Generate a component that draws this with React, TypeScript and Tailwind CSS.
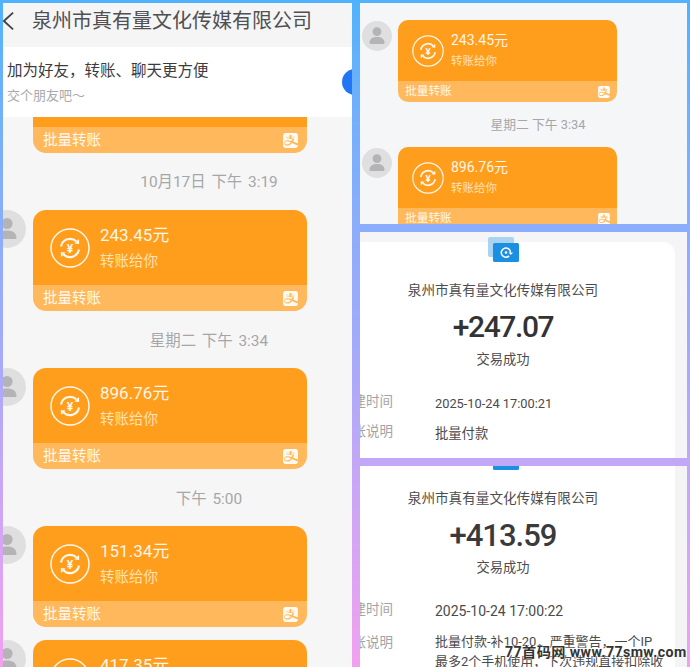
import React from 'react';
import { SiAlipay } from 'react-icons/si';

const sans = "font-['Roboto','Noto_Sans_CJK_SC',sans-serif]";

function TransferIcon({ className }: { className: string }) {
  return (
    <svg viewBox="0 0 40 40" fill="none" stroke="#fff7ea" className={className}>
      <circle cx="20" cy="20" r="19" strokeWidth="1.5" />
      <path d="M11 18.500a9.200 9.200 0 0 1 15.500-5" strokeWidth="2.200" />
      <path d="M29 21.500a9.200 9.200 0 0 1-15.500 5" strokeWidth="2.200" />
      <path d="M29 11l.2 5-4.900-.6z" fill="#fff7ea" stroke="none" />
      <path d="M11 29l-.2-5 4.900.6z" fill="#fff7ea" stroke="none" />
      <text x="20" y="24.500" textAnchor="middle" fontSize="12" fontWeight="700" fill="#fff7ea" stroke="none" fontFamily="Roboto">¥</text>
    </svg>
  );
}

function Avatar({ className }: { className: string }) {
  return (
    <div className={`shrink-0 rounded-full bg-[#dfdfe0] ${className}`}>
      <svg viewBox="0 0 38 38" fill="#b4b4b6" className="w-full h-full">
        <circle cx="19" cy="13.500" r="5.600" />
        <path d="M9.500 28c0-5.200 3.800-7.600 9.500-7.600s9.500 2.400 9.500 7.600c0 .7-.4 1-1 1H10.500c-.6 0-1-.3-1-1z" />
      </svg>
    </div>
  );
}

function BigFooter() {
  return (
    <div className="h-[26px] bg-[#ffb85c] flex items-center justify-between pl-[10px] pr-[9px]">
      <span className="text-[14.500px] leading-none pt-[3px] text-[#fff8ec]">批量转账</span>
      <SiAlipay className="w-[15px] h-[15px] text-[#fffaf2]" />
    </div>
  );
}

function BigMessage({ amount }: { amount: string }) {
  return (
    <div className="flex gap-[7px] -ml-[15px]">
      <Avatar className="w-[38px] h-[38px]" />
      <div className="w-[274px] rounded-[13px] overflow-hidden">
        <div className="h-[75px] bg-[#ff9d1c] flex items-center pl-[17px]">
          <TransferIcon className="w-[40px] h-[40px]" />
          <div className="ml-[10px] pt-[1px]">
            <div className="text-[17px] leading-[20px] text-[#fff6e6]">{amount}</div>
            <div className="text-[14.500px] leading-[20px] mt-[7px] text-[#ffe2b5]">转账给你</div>
          </div>
        </div>
        <BigFooter />
      </div>
    </div>
  );
}

function SmallMessage({ amount, cut }: { amount: string; cut?: boolean }) {
  return (
    <div className="flex gap-[6px] pl-[2px]">
      <Avatar className="w-[30px] h-[30px] mt-[1px]" />
      <div className={`w-[219px] overflow-hidden ${cut ? 'rounded-t-[10px]' : 'rounded-[10px]'}`}>
        <div className="h-[61px] bg-[#ff9d1c] flex items-center pl-[14px]">
          <TransferIcon className="w-[32px] h-[32px]" />
          <div className="ml-[7px] mb-[1px]">
            <div className="text-[14px] leading-[16px] text-[#fff6e6]">{amount}</div>
            <div className="text-[11.500px] leading-[14px] mt-[6px] text-[#ffe2b5]">转账给你</div>
          </div>
        </div>
        <div className="h-[21px] bg-[#ffb85c] flex items-center justify-between pl-[7px] pr-[7px]">
          <span className="text-[11.700px] leading-none text-[#fff8ec]">批量转账</span>
          <SiAlipay className="w-[12px] h-[12px] text-[#fffaf2]" />
        </div>
      </div>
    </div>
  );
}

function ReceiptIcon({ className }: { className: string }) {
  return (
    <svg viewBox="0 0 31 25" className={className}>
      <rect x="0" y="0" width="26" height="20" rx="2" fill="#a9d3f1" />
      <rect x="5" y="6" width="26" height="19" rx="1.500" fill="#1b8fe2" />
      <path d="M22.500 15.500a4.600 4.600 0 1 0-1.400 3.400" fill="none" stroke="#fff" strokeWidth="1.500" />
      <path d="M20.500 15.500h4.600l-2.300 2.500z" fill="#fff" />
      <circle cx="18" cy="15.500" r="1.300" fill="#fff" />
    </svg>
  );
}

function DetailRow({ label, children, className }: { label: string; children: React.ReactNode; className: string }) {
  return (
    <div className={`flex ${className}`}>
      <span className="w-[56px] ml-[8px] shrink-0 text-[13.500px] leading-[20px] text-[#a3a3a5]">{label}</span>
      <div className="ml-[40px] text-[#4a4a4c]">{children}</div>
    </div>
  );
}

function Time({ children, className }: { children: React.ReactNode; className: string }) {
  return <div className={`text-center leading-[20px] text-[#a6a6a8] ${className}`}>{children}</div>;
}

export default function App() {
  return (
    <div className={`relative w-[690px] h-[667px] overflow-hidden flex gap-[8px] pl-[3px] pt-[3px] bg-gradient-to-b from-[#4fb2fc] via-[#a0aafb] to-[#f2a0f0] ${sans}`}>
      {/* chat */}
      <div className="w-[349px] h-[664px] shrink-0 overflow-hidden bg-[#f6f6f7]">
        <div className="h-[44px] flex items-center bg-[#f5f5f6] pb-[9px]">
          <svg viewBox="0 0 12 20" className="w-[11px] h-[20px] shrink-0" fill="none" stroke="#444" strokeWidth="2">
            <path d="M11 .8 1 10l10 9.200" />
          </svg>
          <span className="ml-[18px] text-[20px] leading-none text-[#505052] whitespace-nowrap">泉州市真有量文化传媒有限公司</span>
        </div>
        <div className="h-[70px] bg-white flex items-center justify-between pl-[4px]">
          <div>
            <div className="text-[15.500px] leading-[22px] text-[#3c3c3e]">加为好友，转账、聊天更方便</div>
            <div className="text-[13px] leading-[18px] mt-[5px] text-[#a9a9ab]">交个朋友吧～</div>
          </div>
          <div className="w-[26px] h-[26px] rounded-full bg-[#2176f5] -mr-[16px]" />
        </div>
        <div className="ml-[30px] w-[274px] rounded-b-[13px] overflow-hidden">
          <div className="h-[10px] bg-[#ff9d1c]" />
          <BigFooter />
        </div>
        <Time className="pl-[63px] mt-[19px] text-[15.400px] [word-spacing:2px]">10月17日 下午 3:19</Time>
        <div className="mt-[18px]"><BigMessage amount="243.45元" /></div>
        <Time className="pl-[63px] mt-[20px] text-[15.400px] [word-spacing:2px]">星期二 下午 3:34</Time>
        <div className="mt-[17px]"><BigMessage amount="896.76元" /></div>
        <Time className="pl-[63px] mt-[20px] text-[15.400px] [word-spacing:2px]">下午 5:00</Time>
        <div className="mt-[17px]"><BigMessage amount="151.34元" /></div>
        <div className="mt-[13px]"><BigMessage amount="417.35元" /></div>
      </div>

      {/* right column */}
      <div className="w-[327px] h-[664px] shrink-0 flex flex-col gap-[8px]">
        <div className="h-[221px] shrink-0 overflow-hidden bg-[#f5f6f8] pt-[17px]">
          <SmallMessage amount="243.45元" />
          <Time className="pl-[29px] mt-[13px] text-[12.800px]">星期二 下午 3:34</Time>
          <div className="mt-[12px]"><SmallMessage amount="896.76元" cut /></div>
        </div>

        <div className="h-[226px] shrink-0 relative overflow-hidden bg-[#f5f4f6] pt-[10px]">
          <ReceiptIcon className="absolute left-[128px] top-[5px] w-[31px] h-[25px]" />
          <div className="w-[344px] h-[300px] -ml-[29px] bg-white rounded-tr-[12px] pt-[38px]">
            <div className="text-center text-[13.600px] leading-[20px] text-[#4c4c4e]">泉州市真有量文化传媒有限公司</div>
            <div className="text-center text-[30px] leading-[36px] mt-[9px] font-medium tracking-[-1.400px] text-[#333335]">+247.07</div>
            <div className="text-center text-[13.300px] leading-[20px] mt-[5px] text-[#4c4c4e]">交易成功</div>
            <DetailRow label="创建时间" className="mt-[21px]">
              <span className="text-[12.800px] leading-[20px]">2025-10-24 17:00:21</span>
            </DetailRow>
            <DetailRow label="转账说明" className="mt-[6px]">
              <span className="text-[13.300px] leading-[20px]">批量付款</span>
            </DetailRow>
          </div>
        </div>

        <div className="flex-1 relative overflow-hidden bg-[#f4f4f5]">
          <ReceiptIcon className="absolute left-[128px] -top-[21px] w-[31px] h-[25px]" />
          <div className="w-[344px] h-[300px] -ml-[29px] bg-white pt-[22px]">
            <div className="text-center text-[13.600px] leading-[20px] text-[#4c4c4e]">泉州市真有量文化传媒有限公司</div>
            <div className="text-center text-[31px] leading-[36px] mt-[10px] font-medium tracking-[-1px] text-[#3a3a3c]">+413.59</div>
            <div className="text-center text-[13.300px] leading-[20px] mt-[4px] text-[#4c4c4e]">交易成功</div>
            <DetailRow label="创建时间" className="mt-[21px]">
              <span className="text-[14px] leading-[20px]">2025-10-24 17:00:22</span>
            </DetailRow>
            <DetailRow label="转账说明" className="mt-[9px]">
              <div className="w-[225px] text-[13px] leading-[20px] whitespace-nowrap">
                <div>批量付款-补10-20，严重警告，一个IP</div>
                <div>最多2个手机使用，下次违规直接扣除收</div>
              </div>
            </DetailRow>
          </div>
        </div>
      </div>

      {/* watermark */}
      <div className="absolute left-[505px] top-[642px] text-[14.200px] leading-[20px] font-bold whitespace-nowrap tracking-[0.4px] text-[#333] [text-shadow:0_0_2px_#fff,0_0_2px_#fff]">
        77首码网 www.77smw.com
      </div>
    </div>
  );
}
